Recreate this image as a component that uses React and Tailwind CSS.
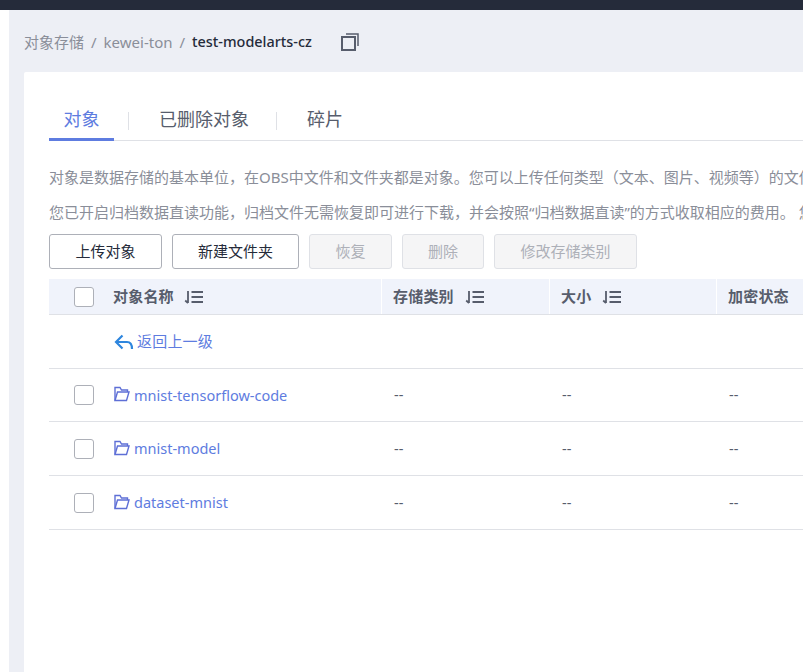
import React from 'react';

const FONT = 'font-["Noto_Sans","Noto_Sans_CJK_SC",sans-serif]';

const rows = [
  { name: 'mnist-tensorflow-code', height: 'h-[53px]' },
  { name: 'mnist-model', height: 'h-[54px]' },
  { name: 'dataset-mnist', height: 'h-[54px]' },
];
const cols = 'grid grid-cols-[332px_168px_167px_200px]';

const SortIcon = () => (
  <svg width="20" height="14" viewBox="0 0 20 14" fill="none" stroke="#575d6c" strokeWidth="1.8" className="shrink-0">
    <path d="M4 1v12M1.2 10.5L4 13" />
    <path d="M7.5 2h11.5M7.5 7h11.5M7.5 12h11.5" />
  </svg>
);

const FolderIcon = () => (
  <svg width="16" height="16" viewBox="0 0 16 16" fill="none" stroke="#5e6fd6" strokeWidth="1.4" className="shrink-0">
    <path d="M1 14.5V1.5h5l1.5 2.5h6v2" />
    <path d="M1 14.5h11.5L15 6H3.5L1 14.5z" />
  </svg>
);

const Checkbox = () => <div className="w-5 h-5 rounded-[3px] border border-[#adb0b8] bg-white" />;

const Button = ({ children, width }) => (
  <div className={`h-[35px] ${width} flex items-center justify-center bg-white border border-[#adb0b8] rounded-[3px] text-[15px] text-[#252b3a]`}>
    {children}
  </div>
);

const DisabledButton = ({ children, width }) => (
  <div className={`h-[35px] ${width} flex items-center justify-center bg-[#f5f5f6] border border-[#dfe1e6] rounded-[3px] text-[15px] text-[#adb0b8]`}>
    {children}
  </div>
);

const App = () => {
  return (
    <div className={`w-[803px] h-[672px] overflow-hidden bg-white flex flex-col ${FONT}`}>
      <div className="h-[10px] shrink-0 bg-[#252b3a]" />
      <div className="flex-1 flex min-h-0">
        <div className="w-[9px] shrink-0 bg-white" />
        <div className="flex-1 min-w-0 bg-[#edeff5] pl-[15px] flex flex-col">
          {/* Breadcrumb */}
          <div className="h-[62px] pt-[2px] shrink-0 flex items-center whitespace-nowrap text-[15px] text-[#8a8e99]">
            <span>对象存储</span>
            <span className="mx-[7px]">/</span>
            <span>kewei-ton</span>
            <span className="mx-[7px]">/</span>
            <span className="text-[#252b3a] font-medium text-[14.4px]">test-modelarts-cz</span>
            <svg width="18" height="18" viewBox="0 0 18 18" fill="none" stroke="#575d6c" className="ml-[29px]">
              <rect x="1" y="4" width="13" height="13" strokeWidth="2" />
              <path d="M5 1h12v12" strokeWidth="1.5" />
            </svg>
          </div>

          {/* Card */}
          <div className="flex-1 bg-white rounded-tl-[2px] pl-[25px] overflow-hidden">
            <div className="w-[800px] mt-[34px] h-[35px] border-b border-[#dfe1e6] flex items-start text-[18px] text-[#575d6c] whitespace-nowrap">
              <div className="w-[65px] h-[35px] border-b-[3px] border-[#5e7ce0] text-center text-[#5e7ce0] leading-[27px]">对象</div>
              <div className="w-px h-[18px] mt-[6px] ml-[14px] bg-[#dfe1e6]" />
              <div className="ml-[30px] leading-[27px]">已删除对象</div>
              <div className="w-px h-[18px] mt-[6px] ml-[27px] bg-[#dfe1e6]" />
              <div className="ml-[30px] leading-[27px]">碎片</div>
            </div>

            <p className="mt-[25px] h-[22px] leading-[22px] text-[15px] text-[#8a8e99] whitespace-nowrap">
              对象是数据存储的基本单位，在OBS中文件和文件夹都是对象。您可以上传任何类型（文本、图片、视频等）的文件。
            </p>
            <p className="mt-[13px] h-[22px] leading-[22px] text-[15px] text-[#8a8e99] whitespace-nowrap">
              您已开启归档数据直读功能，归档文件无需恢复即可进行下载，并会按照“归档数据直读”的方式收取相应的费用。 您可以修改
            </p>

            <div className="mt-[11px] flex gap-[10px]">
              <Button width="w-[113px]">上传对象</Button>
              <Button width="w-[127px]">新建文件夹</Button>
              <DisabledButton width="w-[83px]">恢复</DisabledButton>
              <DisabledButton width="w-[82px]">删除</DisabledButton>
              <DisabledButton width="w-[143px]">修改存储类别</DisabledButton>
            </div>

            {/* Table header */}
            <div className={`${cols} mt-[10px] h-[36px] bg-[#f0f3fb] border-b border-[#dfe1e6] text-[15px] font-semibold tracking-[0.2px] text-[#575d6c] whitespace-nowrap`}>
              <div className="flex items-center pl-[25px]">
                <Checkbox />
                <span className="ml-[19px]">对象名称</span>
                <span className="ml-[10px]"><SortIcon /></span>
              </div>
              <div className="flex items-center pl-[11px] border-l border-white">
                <span>存储类别</span>
                <span className="ml-[11px]"><SortIcon /></span>
              </div>
              <div className="flex items-center pl-[11px] border-l border-white">
                <span>大小</span>
                <span className="ml-[11px]"><SortIcon /></span>
              </div>
              <div className="flex items-center pl-[11px] border-l border-white">
                <span>加密状态</span>
              </div>
            </div>

            {/* Back row */}
            <div className="h-[54px] pb-[1px] border-b border-[#dfe1e6] flex items-center pl-[65px] text-[15px] tracking-[0.2px] text-[#5e7ce0]">
              <svg width="20" height="17" viewBox="0 0 20 17" fill="none" stroke="#2e86de" strokeWidth="2.2" className="mr-[3px] mt-[3px]">
                <path d="M8.5 1.5L2 8L8.5 14.5" />
                <path d="M2 8h11c3 0 5 2 5 7" />
              </svg>
              <span>返回上一级</span>
            </div>

            {/* Rows */}
            {rows.map(({ name, height }) => (
              <div key={name} className={`${cols} ${height} border-b border-[#dfe1e6] text-[14.5px] text-[#575d6c] whitespace-nowrap`}>
                <div className="flex items-center pl-[25px]">
                  <Checkbox />
                  <span className="ml-[20px] -mt-[2px]"><FolderIcon /></span>
                  <span className="ml-[4px] mt-[1px] text-[#5e7ce0]">{name}</span>
                </div>
                <div className="flex items-center pl-[13px]">--</div>
                <div className="flex items-center pl-[13px]">--</div>
                <div className="flex items-center pl-[13px]">--</div>
              </div>
            ))}
          </div>
        </div>
      </div>
    </div>
  );
};

export default App;
